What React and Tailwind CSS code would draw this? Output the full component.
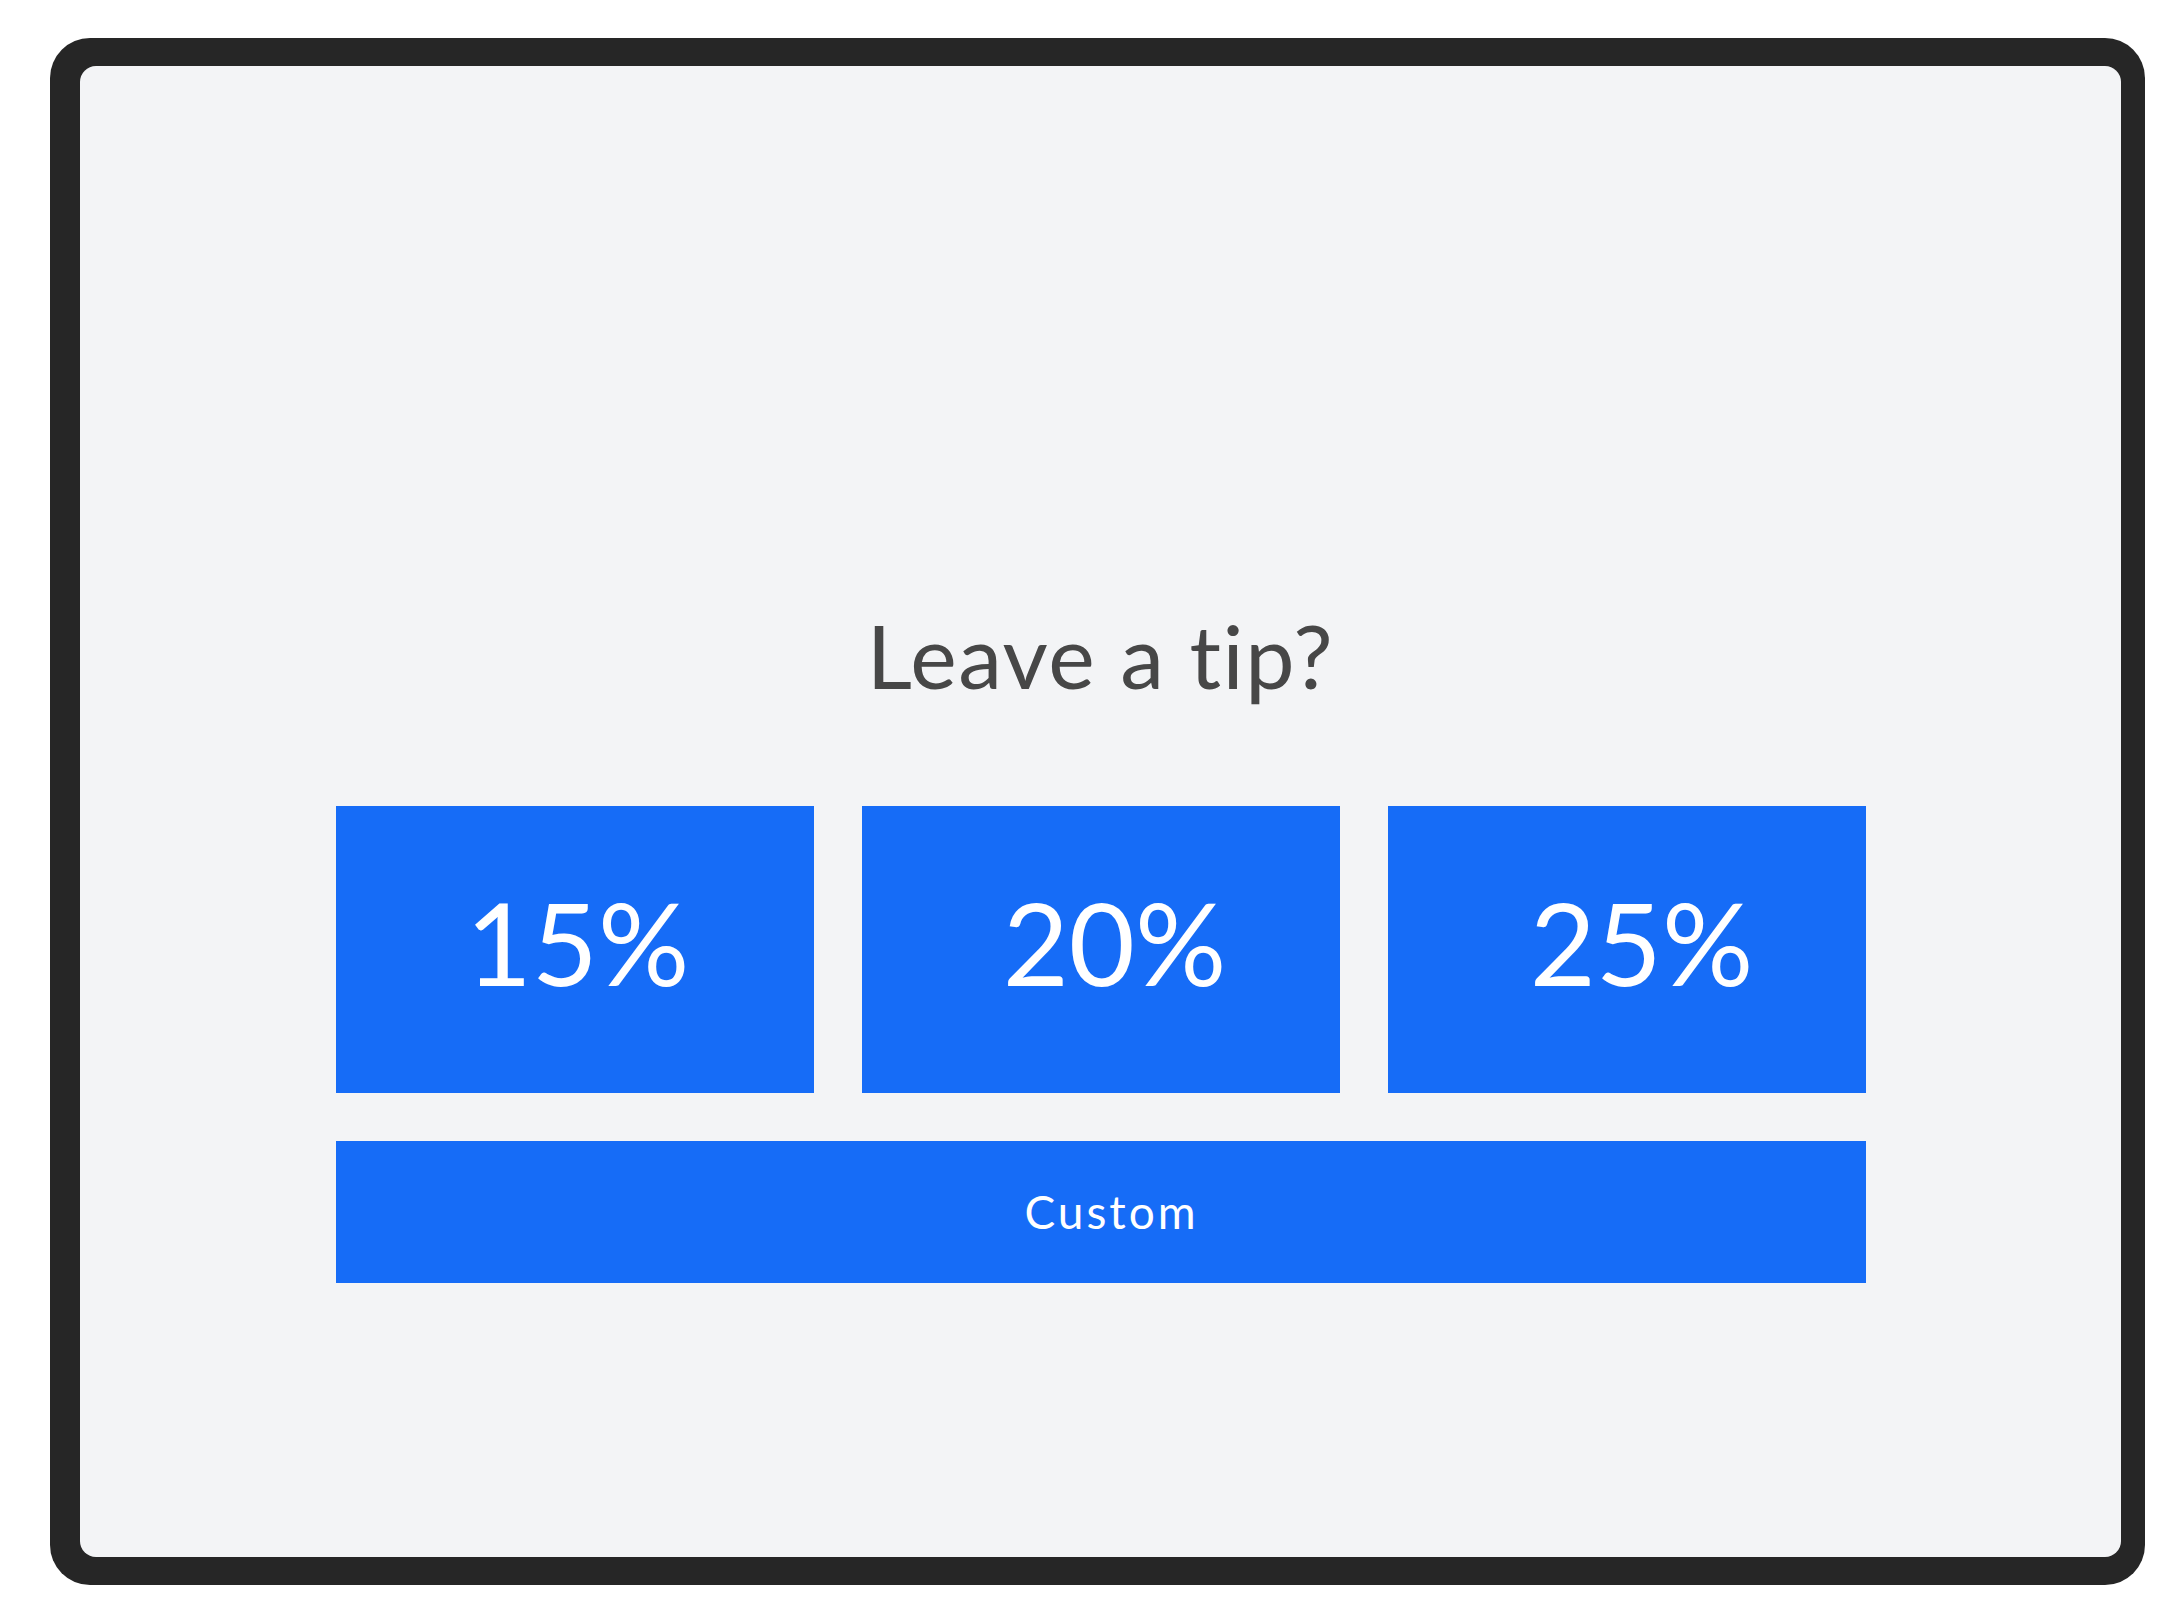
export default function App() {
  const tips = [
    { label: "15%", shift: "pl-[6px]" },
    { label: "20%", shift: "pl-[28px]" },
    { label: "25%", shift: "pl-[30px]" },
  ];

  return (
    <div className="w-[2184px] h-[1620px] bg-white pl-[50px] pt-[38px]">
      {/* device bezel */}
      <div className="w-[2095px] h-[1547px] bg-[#262626] rounded-[40px] pl-[30px] pr-[24px] py-[28px]">
        {/* screen */}
        <div
          className="h-full bg-[#f3f4f6] rounded-[16px] flex flex-col items-center pt-[545px] [font-variant-ligatures:none]"
          style={{ fontFamily: "Lato, 'Open Sans', sans-serif" }}
        >
          <h1 className="text-[88px] leading-none font-normal tracking-[1.5px] text-[#474747]">Leave a tip?</h1>

          <div className="w-[1530px] mt-[107px] flex flex-col gap-[48px]">
            <div className="grid grid-cols-3 gap-[48px]">
              {tips.map((tip) => (
                <button
                  key={tip.label}
                  className={`h-[287px] bg-[#166cf7] text-white text-[114px] leading-none flex items-center justify-center pb-[16px] ${tip.shift}`}
                >
                  {tip.label}
                </button>
              ))}
            </div>
            <button className="h-[142px] bg-[#166cf7] text-white text-[46px] leading-none tracking-[3px] flex items-center justify-center pl-[22px]">
              Custom
            </button>
          </div>
        </div>
      </div>
    </div>
  );
}
